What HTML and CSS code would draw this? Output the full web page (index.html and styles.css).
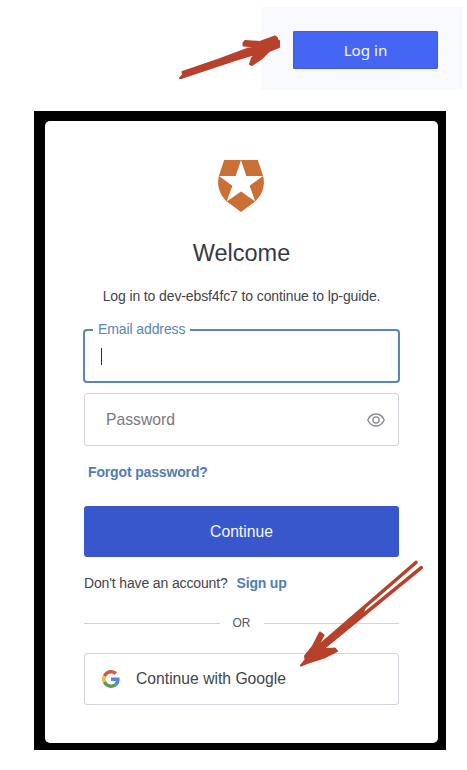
FILE: index.html
```
<!DOCTYPE html>
<html lang="en">
<head>
<meta charset="utf-8">
<title>Log in</title>
<link rel="stylesheet" href="styles.css">
</head>
<body>
<header class="top"><button class="login">Log in</button></header>
<main class="frame">
  <form class="card">
    <svg class="logo" viewBox="0 0 46 52"><path fill="#ca7036" d="M6.2 0H39.8L45 15.5C48 27 43 36 37.5 41.2L23 52 8.5 41.2C3 36-2 27 1 15.5Z"/><path fill="#fff" d="M23 0 28.3 16H45L31.6 25.8 37.3 41.5 23 31.6 8.7 41.5 14.4 25.8 1 16H17.7Z"/></svg>
    <h1><span>Welcome</span></h1>
    <p class="intro"><span>Log in to dev-ebsf4fc7 to continue to lp-guide.</span></p>
    <fieldset class="email"><legend><span>Email address</span></legend><i class="caret"></i></fieldset>
    <div class="password"><span>Password</span>
      <svg class="eye" viewBox="0 0 18 14" fill="none" stroke="#84868e" stroke-width="1.3"><path d="M.8 7C2.6 3 5.5 1 9 1S15.4 3 17.2 7C15.4 11 12.5 13 9 13S2.6 11 .8 7Z"/><circle cx="9" cy="7" r="3.1"/></svg>
    </div>
    <a class="forgot">Forgot password?</a>
    <button class="continue" type="button"><span>Continue</span></button>
    <p class="signup"><span>Don't have an account?</span><a>Sign up</a></p>
    <div class="or"><span>OR</span></div>
    <button class="google" type="button">
      <svg viewBox="0 0 48 48"><path fill="#d15b40" d="M24 9.5c3.54 0 6.71 1.22 9.21 3.6l6.85-6.85C35.9 2.38 30.47 0 24 0 14.62 0 6.51 5.38 2.56 13.22l7.98 6.19C12.43 13.72 17.74 9.5 24 9.5z"/><path fill="#5482e8" d="M46.98 24.55c0-1.57-.15-3.09-.38-4.55H24v9.02h12.94c-.58 2.96-2.26 5.48-4.78 7.18l7.73 6c4.51-4.18 7.09-10.36 7.09-17.65z"/><path fill="#ecbd3b" d="M10.53 28.59a14.5 14.5 0 0 1 0-9.18l-7.98-6.19a24 24 0 0 0 0 21.56z"/><path fill="#589d55" d="M24 48c6.48 0 11.93-2.13 15.89-5.81l-7.73-6c-2.15 1.45-4.92 2.3-8.16 2.3-6.26 0-11.57-4.22-13.47-9.91l-7.98 6.19C6.51 42.62 14.62 48 24 48z"/></svg>
      <span>Continue with Google</span>
    </button>
  </form>
</main>
<svg class="arrows" viewBox="0 0 467 770" fill="#b8412b" stroke="#b8412b" stroke-width="2" stroke-linecap="round" stroke-linejoin="round">
  <path d="M180 78L183 75 182.500 72 219 59.500 254 46.500 243.500 45.500 243.500 43 245 41 260 42 275 36.500 277 38 277 40 279 41 279 47 269 51 261 59 252 65 250 64 252 58 258 53 235 60 181 78Z"/>
  <path d="M301 665.500L305.500 660 305 656 313 646 320 632.500 323.500 635 317 648 329 649 335 648.500 337 651 324 657.500 307 663Z"/>
  <path fill="none" stroke-width="3.6" d="M416 562.500L310 654M421.300 567.700L307 661"/>
  <path stroke="none" d="M366 607L312 653 316 655 364 613Z"/>
</svg>
</body>
</html>
```
FILE: styles.css
```
*{box-sizing:border-box}
body{margin:0;width:467px;height:770px;background:#fff;position:relative;overflow:hidden;font-family:"Liberation Sans",Arial,sans-serif;color:#42444c}
button{font-family:inherit;border:0;padding:0}
h1,p{margin:0}
span,a{white-space:nowrap}
.top{width:202px;height:83px;margin:6.500px 0 0 261px;padding:24.500px 0 0 32px;background:#f7f9fc}
.login{display:block;width:145px;height:38px;border-radius:2px;background:#4466f2;box-shadow:inset 0 0 0 1px #3c5cdd;color:#f5f7ff;font:15.200px/39px "Noto Sans",sans-serif;text-align:center}
.frame{margin:21.500px 0 0 34px;width:412px;height:639px;background:#000;padding:10px 8px 7px 11px}
.card{display:flex;flex-direction:column;width:393px;height:622px;background:#fff;border-radius:5px;padding:39px 39px 0}
.logo{width:46px;height:52px;margin:0 0 0 134px;flex:none}
h1{margin-top:26px;height:30px;font-size:23.500px;line-height:30px;font-weight:400;text-align:center;color:#383a43}
.intro{margin-top:18px;height:20px;font-size:14px;line-height:20px;text-align:center;letter-spacing:-.12px}
.email{margin:14px -1px 0;height:63px;border:2px solid #5985b8;border-radius:4px;padding:0 0 0 16px;min-width:0;flex:none}
.email legend{height:20px;padding:0 5px;margin-left:-8px;color:#5985b8;font-size:14px;line-height:18px;letter-spacing:-.1px}
.caret{display:block;width:1px;height:17px;background:#30323a;margin-top:8px}
.password{margin-top:10px;height:53px;flex:none;border:1px solid #d2d4dc;border-radius:3px;padding:0 13px 0 21px;display:flex;justify-content:space-between;align-items:center;color:#777980;font-size:15.700px}
.eye{width:18px;height:14px}
.forgot{margin:16px 0 0 4px;height:20px;font-size:14px;line-height:20px;font-weight:700;color:#4f7db2;letter-spacing:-.15px}
.continue{margin-top:24px;height:51px;flex:none;background:#3957cc;border-radius:3px;color:#f7f8ff;font-size:15.700px}
.signup{margin-top:16px;height:20px;font-size:14px;line-height:20px;display:flex;letter-spacing:-.14px}
.signup a{margin-left:9px;color:#4f7db2;font-weight:700;letter-spacing:-.2px}
.or{margin-top:20px;height:20px;display:flex;align-items:center;gap:13px;font-size:12px;color:#55575f}
.or:before,.or:after{content:"";height:1px;background:#d2d4dc;flex:1}
.google{margin-top:20px;height:52px;flex:none;background:#fff;border:1px solid #d2d4dc;border-radius:3px;padding-left:17px;display:flex;align-items:center;gap:16px;color:#42444c;font-size:15.700px}
.google svg{width:18px;height:18px}
.arrows{position:absolute;left:0;top:0;width:467px;height:770px;pointer-events:none}
```
